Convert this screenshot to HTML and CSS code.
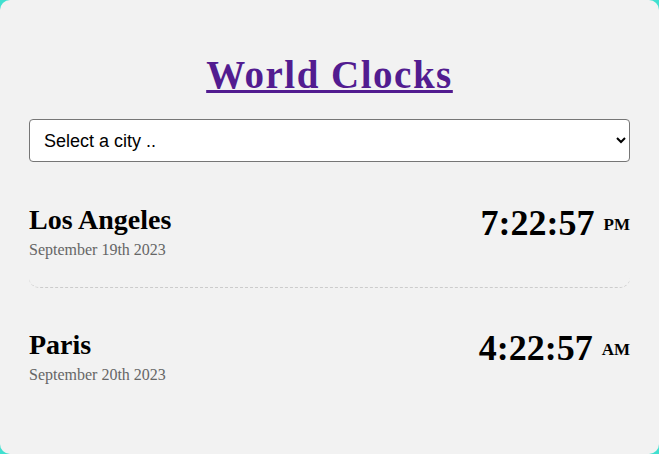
FILE: index.html
```html
<!DOCTYPE html>
<html>
<head>
<meta charset="utf-8">
<link rel="stylesheet" href="styles.css">
</head>
<body>
<div class="app">
  <h1 class="title"><a class="title-link" href="#">World Clocks</a></h1>
  <select class="city-select">
    <option>Select a city ..</option>
  </select>
  <div class="cities">
    <div class="city">
      <div class="city-info">
        <h2 class="city-name">Los Angeles</h2>
        <div class="city-date">September 19th 2023</div>
      </div>
      <div class="city-time">7:22:57 <small class="ampm">PM</small></div>
    </div>
    <div class="city">
      <div class="city-info">
        <h2 class="city-name">Paris</h2>
        <div class="city-date">September 20th 2023</div>
      </div>
      <div class="city-time">4:22:57 <small class="ampm">AM</small></div>
    </div>
  </div>
</div>
</body>
</html>
```

FILE: styles.css
```css
html, body {
  margin: 0;
  padding: 0;
}
body {
  background: #40e0d0;
  font-family: "Liberation Serif", serif;
}
.app {
  background: #f2f2f2;
  border-radius: 10px;
  min-height: 454px;
  box-sizing: border-box;
  padding: 53px 29px 20px;
}
.title {
  margin: 0 0 22px;
  text-align: center;
  font-family: "Liberation Serif", serif;
  font-size: 39px;
  letter-spacing: 1.5px;
  font-weight: bold;
  line-height: 44px;
}
.title-link {
  color: #521c90;
  text-decoration: underline;
}
.city-select {
  display: block;
  width: 100%;
  height: 43px;
  box-sizing: border-box;
  padding: 0 10px;
  font-family: "Liberation Sans", Arial, sans-serif;
  font-size: 18px;
  color: #000;
  background: #fff;
  border: 1px solid #767676;
  border-radius: 4px;
}
.cities {
  margin-top: 21px;
}
.city {
  display: flex;
  justify-content: space-between;
  align-items: flex-start;
  padding: 20px 0 27px;
  margin-bottom: 20px;
  border-bottom: 1px dashed #ccc;
  border-radius: 10px;
}
.city:last-child {
  border-bottom: none;
}
.city-name {
  margin: 0 0 3px;
  font-size: 28px;
  line-height: 34px;
  font-weight: bold;
}
.city-date {
  font-size: 16px;
  color: #666;
  line-height: 20px;
}
.city-time {
  font-size: 36px;
  line-height: 40px;
  font-weight: bold;
}
.ampm {
  font-size: 17px;
  vertical-align: 0.3em;
}
```
